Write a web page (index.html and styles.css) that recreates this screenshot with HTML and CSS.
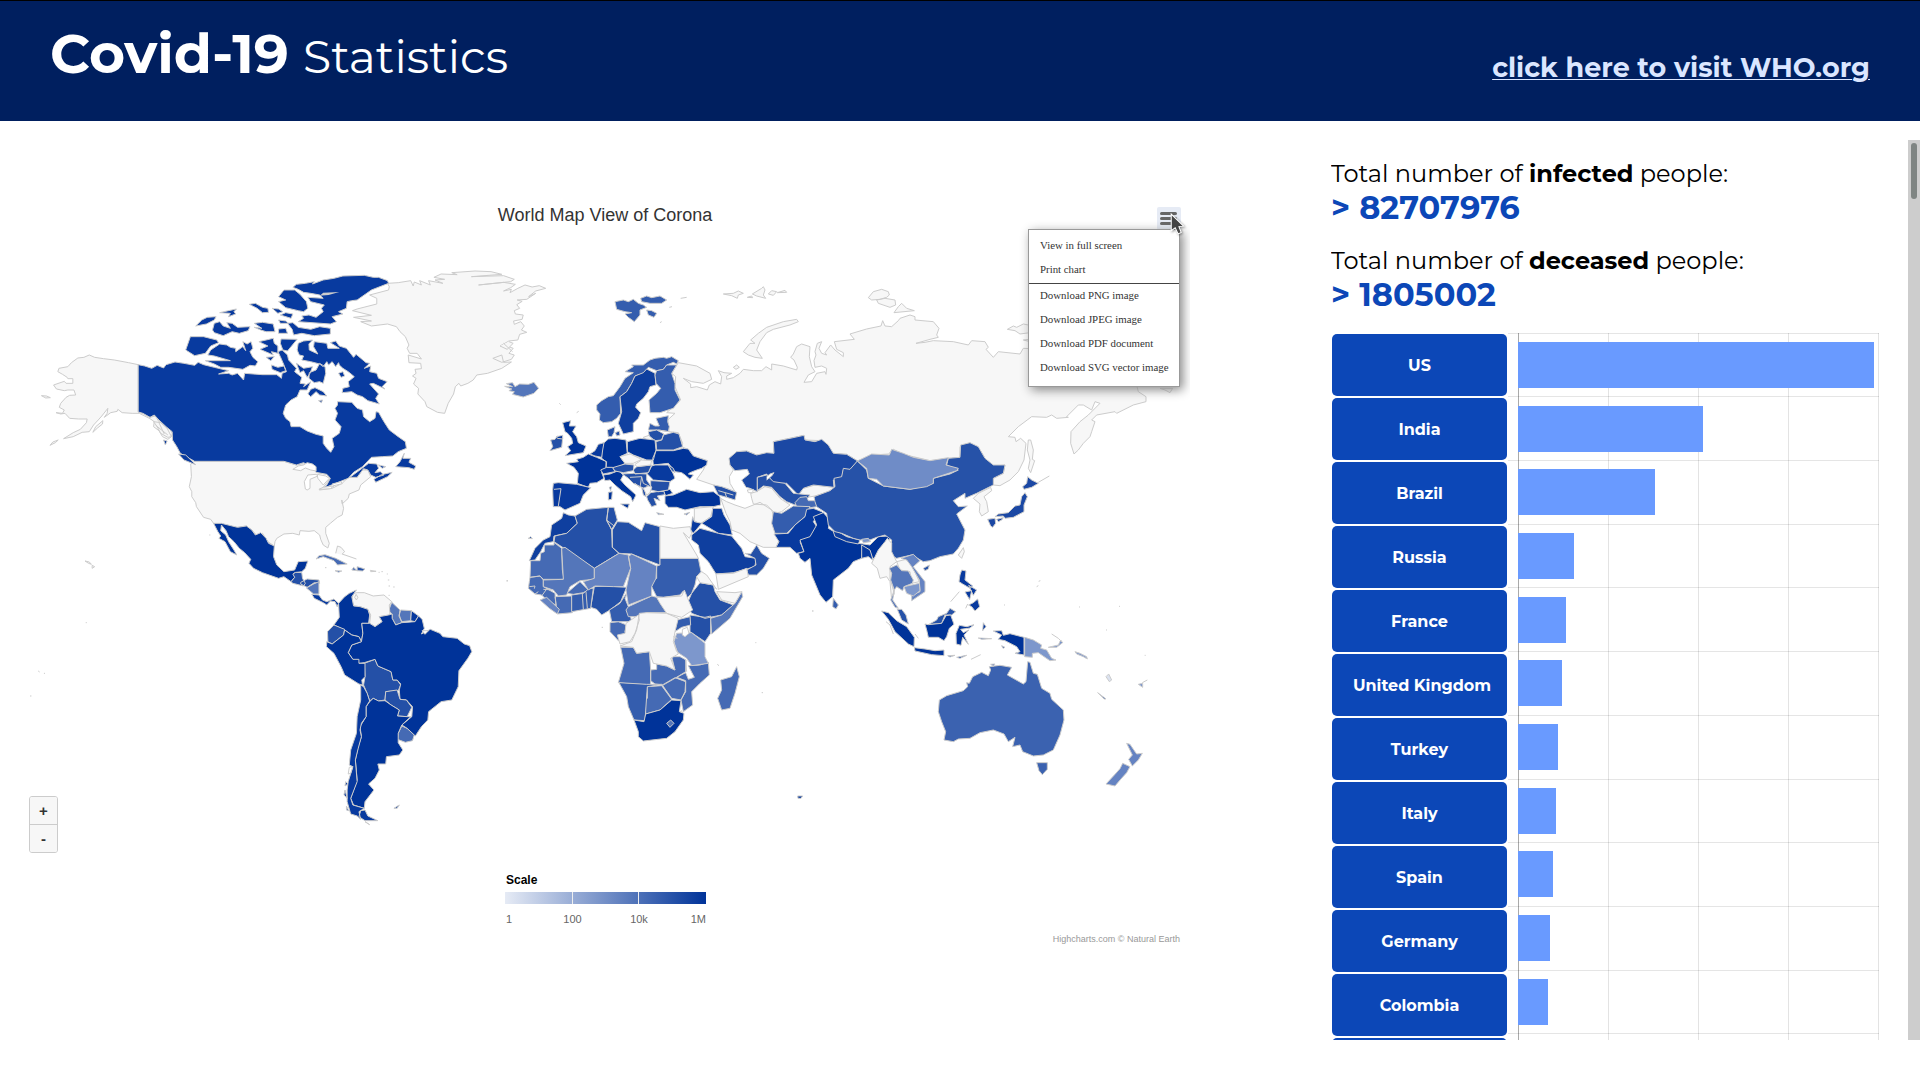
FILE: index.html
```html
<!DOCTYPE html>
<html lang="en">
<head>
<meta charset="utf-8">
<title>Covid-19 Statistics</title>
<link rel="stylesheet" href="styles.css">
</head>
<body>
<header class="header">
  <h1 class="brand"><span class="brand-name">Covid-19</span><span class="brand-sub">Statistics</span></h1>
  <a class="who-link" href="#">click here to visit WHO.org</a>
</header>
<main class="main">
  <section class="chart">
    <h2 class="chart-title">World Map View of Corona</h2>
    <div class="map-wrap">
      <svg class="map" viewBox="0 240 1190 600" width="1190" height="600">
        <!-- North America -->
        <g transform="translate(0 240) scale(.357143 .333333)">
          <g class="c-none">
            <path d="M387,374 360,368 320,360 290,356 265,352 250,345 235,352 218,354 200,368 190,380 165,385 162,395 175,403 188,412 190,416 204,416 204,430 185,430 180,424 150,435 158,447 180,452 190,450 207,450 212,465 195,466 185,472 170,490 166,502 180,510 175,520 157,518 170,522 182,520 195,535 220,537 244,537 242,548 225,568 205,578 178,596 205,590 230,577 250,575 262,555 275,540 285,528 302,505 300,520 292,532 310,518 328,514 330,508 342,518 370,520 390,520 405,528 420,536 432,545 430,560 445,572 455,590 470,598 480,590 483,580 470,560 455,550 445,545 435,528 420,532 400,520 387,516Z"/>
            <path d="M140,616 148,606 163,600 155,608ZM116,467 130,468 141,473 128,474ZM260,577 268,560 288,542 287,552 273,564Z"/>
            <path d="M430,545 450,548 468,565 480,590 470,592 450,580 440,560ZM436,556 470,585M445,548 460,582"/>
            <path d="M534,672 545,664 795,664 830,675 845,672 860,672 880,685 885,697 915,703 925,715 905,742 895,750 930,745 958,730 975,712 1000,712 1015,690 1030,690 1038,710 1010,735 1005,750 978,762 975,775 958,792 957,780 962,805 958,825 945,832 925,850 912,862 912,880 922,910 918,924 905,915 898,898 895,885 880,872 865,874 840,872 838,885 820,880 795,882 775,895 770,905 768,918 750,905 735,880 718,885 705,870 690,858 665,862 640,862 620,855 598,850 590,838 570,832 550,800 548,788 537,770 537,755 530,740 536,710Z"/>
            <path d="M1085,130 1115,128 1150,122 1157,138 1160,126 1180,135 1175,122 1205,135 1200,122 1240,130 1218,120 1245,118 1215,112 1235,102 1280,104 1265,98 1330,93 1375,95 1405,103 1320,110 1410,107 1440,118 1430,125 1340,135 1410,127 1443,133 1430,143 1410,153 1432,148 1428,158 1450,145 1470,135 1490,141 1510,137 1528,145 1500,153 1480,170 1500,160 1475,178 1448,180 1462,184 1447,194 1455,205 1440,212 1443,222 1465,225 1462,238 1438,243 1440,253 1458,245 1468,258 1460,270 1475,277 1455,283 1450,300 1425,303 1400,318 1420,318 1437,325 1425,340 1440,345 1432,358 1405,367 1380,355 1405,345 1410,367 1432,366 1405,385 1365,400 1335,405 1325,420 1310,430 1290,438 1285,430 1275,440 1270,462 1255,490 1245,520 1225,517 1195,500 1190,485 1170,462 1172,445 1158,432 1165,415 1155,408 1165,400 1162,388 1180,386 1178,370 1145,368 1143,345 1180,357 1168,340 1147,340 1140,325 1145,315 1135,290 1120,275 1110,260 1085,252 1040,258 1010,245 1040,243 990,232 1040,226 987,212 1000,207 1055,192 1055,175 1035,165 1088,150 1090,140Z"/>
            <path d="M1400,318 1420,328 1437,310 1425,305M1410,310 1435,335M940,940 945,918 955,922 965,935 958,942 998,957"/>
          </g>
          <g class="c-ca">
            <path d="M387,374 405,378 425,385 440,376 458,384 465,374 490,366 515,370 545,376 555,367 570,374 600,382 640,392 612,402 640,400 650,405 665,400 682,420 685,400 735,404 775,404 788,415 790,400 802,395 795,375 785,350 778,335 790,330 805,345 808,360 830,385 825,395 845,412 840,430 855,432 850,440 870,425 860,450 840,450 832,470 815,480 800,495 793,520 800,535 812,545 815,560 840,560 860,573 885,583 905,588 905,610 915,625 926,637 935,620 930,595 950,580 955,560 938,540 945,520 938,505 945,495 945,485 985,487 1000,505 1015,510 1018,530 1035,545 1050,535 1053,515 1060,517 1075,545 1090,570 1115,590 1135,605 1138,625 1115,635 1100,648 1070,650 1040,652 1015,680 990,697 975,715 940,730 905,745 915,735 925,715 915,703 885,697 880,685 870,680 850,668 830,675 795,664 545,664 530,655 505,640 495,620 483,600 482,575 465,560 445,540 432,525 420,532 400,520 387,516Z"/>
            <path d="M980,712 1015,684 1032,670 1055,672 1060,685 1050,698 1065,695 1075,705 1052,712 1038,705 1030,690 1018,686 1000,712ZM1047,718 1068,704 1098,697 1085,710 1052,727ZM1132,640 1128,655 1150,655 1145,667 1164,678 1160,688 1145,683 1108,680 1120,665ZM500,642 520,645 548,674 515,660ZM458,600 468,603 463,615ZM1060,675 1080,680 1070,685Z"/>
            <path d="M832,330 835,310 850,303 875,300 865,312 866,330 890,342 878,320 880,305 915,310 918,325 950,325 925,308 940,303 950,318 970,325 985,345 990,352 997,343 1005,350 1025,368 1035,370 1020,385 1038,378 1035,395 1055,400 1060,415 1084,425 1070,440 1078,447 1045,430 1035,432 1060,462 1052,475 1062,492 1030,482 1015,470 1000,465 985,455 958,458 960,445 978,440 975,425 992,410 975,395 960,385 950,375 948,368 940,380 930,365 920,375 915,365 905,380 895,372 870,365 845,360 850,348 838,345ZM948,400 960,395 965,408 955,412ZM866,398 885,390 895,370 910,380 912,400 905,430 895,425 880,428 865,415ZM862,462 870,448 882,443 905,455 915,468 895,465 885,455 870,470ZM892,482 903,480 900,488ZM830,370 850,385 875,380 868,400 860,412 850,392 840,398Z"/>
            <path d="M582,345 590,330 615,312 635,315 645,322 660,325 660,335 680,320 688,332 680,305 692,312 703,305 708,325 700,335 708,352 722,365 715,378 700,376 680,388 640,382 618,382 600,372 575,362 645,362 600,348ZM533,290 570,290 607,300 612,308 590,318 575,340 545,347 520,330ZM725,305 765,295 768,310 778,318 778,340 760,335 765,345 728,328 750,318ZM745,352 768,350 758,362ZM787,297 832,298 815,320 805,333 792,330 785,310ZM760,375 778,382 795,378 800,392 785,398 762,388Z"/>
            <path d="M595,270 600,250 615,245 625,258 645,265 635,248 650,250 665,262 700,260 695,272 670,280 650,275 625,287 600,278ZM548,258 565,240 580,232 605,230 600,240 578,252ZM712,262 733,265 712,250 735,247 765,252 770,275 745,275 730,270ZM780,267 800,265 805,280 780,280ZM780,240 800,243 808,250 785,250ZM698,193 715,190 735,202 750,205 752,217 735,218 720,205ZM615,218 640,212 662,207 655,215 660,222 640,230 645,220ZM762,205 780,207 792,215 778,220ZM785,225 800,218 820,222 815,235Z"/>
            <path d="M780,170 795,150 825,150 840,163 858,185 862,205 850,215 835,212 800,203 780,185 800,180ZM805,250 820,248 835,262 870,268 895,260 925,265 925,282 880,287 845,280 822,285 818,268ZM820,142 830,133 855,130 880,125 875,132 905,120 935,115 960,108 1020,106 1045,112 1060,112 1085,122 1088,130 1040,150 1000,180 985,182 972,185 970,205 948,215 960,222 930,230 942,245 925,252 835,245 850,235 845,228 865,225 885,232 905,215 900,205 908,195 870,185 862,172 905,175 895,165 870,160 850,157 835,148Z"/>
          </g>
          <path class="ice" d="M895,167 905,158 950,156 920,165Z"/>
          <path class="c-d3" d="M1413,439 1435,440 1418,431 1435,428 1442,440 1455,432 1480,433 1495,427 1508,445 1495,460 1465,471 1435,463 1440,455 1425,452 1433,447Z"/>
          <path class="sea" d="M820,688 835,678 850,675 860,668 875,672 885,680 885,693 870,690 855,684 842,692ZM855,747 852,725 862,705 885,703 890,708 868,718 868,745 860,750ZM888,703 912,708 922,715 905,735 890,715ZM893,748 905,742 935,738 925,746ZM930,732 955,725 958,731 935,737Z"/>
        </g>
        <!-- Latin America -->
        <g transform="translate(0 500) scale(.357143 .333333)">
          <path class="c-0" d="M598,70 620,70 665,82 690,78 705,90 715,105 730,98 745,115 752,130 768,138 766,170 775,195 795,215 825,210 835,185 862,183 855,205 845,215 825,218 825,232 815,245 795,230 780,235 735,218 710,205 697,190 702,178 685,158 670,145 655,125 640,110 633,92 620,75 618,92 632,105 640,125 655,150 663,165 645,155 630,125 613,115 618,108 610,95Z"/>
          <path class="c-d1" d="M815,245 825,232 820,222 828,217 845,218 847,235 855,250 850,258 820,250ZM842,247 860,237 893,240 895,250 880,248 860,262 842,252ZM1000,200 1022,207 1015,213 1000,212ZM1020,490 1050,478 1058,498 1095,515 1100,540 1112,540 1122,555 1115,572 1080,575 1078,600 1060,603 1045,595 1035,603 1028,580 1018,555 1022,530Z"/>
          <path class="c-d3" d="M858,264 878,252 893,245 893,282 878,282ZM1097,307 1120,330 1118,345 1125,368 1108,375 1098,355 1098,342 1088,332ZM1122,330 1152,332 1150,362 1125,365 1117,348Z"/>
          <path class="c-d2" d="M885,177 893,167 910,164 940,175 972,192 945,195 935,182 905,170ZM985,210 1000,212 990,202ZM938,212 957,213 948,217ZM1125,678 1140,685 1160,705 1155,722 1135,727 1113,718 1115,700Z"/>
          <path class="c-ca" d="M873,283 893,285 903,300 915,305 935,297 948,310 944,320 938,305 925,303 915,315 905,308 880,295ZM1152,332 1172,348 1162,365 1150,362Z"/>
          <path class="c-none" d="M990,280 1000,278 1020,278 1045,288 1075,285 1097,305 1090,315 1092,345 1062,350 1070,365 1050,380 1035,370 1038,345 1030,328 1008,320 990,318 985,295ZM238,183 250,186 256,193 248,190ZM258,196 265,200 258,205ZM1037,211 1053,214 1038,215ZM997,283 1002,292 998,300 993,292Z"/>
          <path class="c-none" d="M240,368h3M107,513l4,3M123,520h3M84,588h4M586,105h3M1068,215h4M1083,222h3M1086,240h4M1088,258h4M1101,261h4M1088,286h3M910,203h4M1418,243h4M1060,217h3"/>
          <path class="c-0" d="M948,310 965,290 978,280 998,270 985,290 990,318 1008,320 1030,328 1035,345 1032,370 1013,370 1016,400 1012,425 1005,410 985,405 965,390 935,375 950,352Z"/>
          <path class="c-0" d="M1062,350 1088,345 1098,342 1098,355 1108,375 1125,368 1162,365 1172,348 1182,358 1188,385 1180,402 1205,388 1232,400 1240,410 1280,415 1300,432 1315,437 1321,455 1310,475 1285,512 1283,560 1265,600 1235,605 1200,635 1198,660 1180,680 1163,708 1140,685 1125,675 1153,650 1155,620 1138,600 1120,598 1118,570 1122,552 1112,540 1100,540 1095,515 1058,498 1050,478 1020,488 1005,490 988,478 975,458 985,435 1012,425 1016,400 1013,370 1035,370 1050,380 1070,365Z"/>
          <path class="c-d1" d="M935,375 965,388 962,405 930,432 918,425 917,395ZM1078,600 1080,575 1112,570 1120,598 1138,600 1153,622 1140,650 1113,648 1118,630 1095,615Z"/>
          <path class="c-0" d="M965,390 985,405 1005,410 1012,425 985,435 975,458 988,478 1005,478 1005,490 1022,490 1022,530 1013,540 1015,555 1005,552 965,525 955,500 935,460 914,440 915,425 930,432 962,405Z"/>
          <path class="c-0" d="M1035,605 1045,595 1060,603 1078,602 1095,615 1118,630 1113,648 1140,650 1150,650 1125,675 1115,700 1115,728 1128,750 1118,765 1082,770 1080,792 1058,792 1062,810 1050,835 1032,852 1047,870 1022,905 1020,925 990,915 982,895 1000,840 995,780 1003,740 1012,710 1008,680 1025,650 1025,620Z"/>
          <path class="c-ca" d="M1010,555 1018,560 1028,580 1035,603 1025,620 1025,650 1012,670 1008,690 1012,710 1003,745 995,780 1000,845 982,895 988,915 1020,925 1005,935 1010,958 1000,948 982,942 972,905 972,870 975,845 988,800 978,795 982,750 998,700 1000,650 1010,600ZM1010,932 1022,930 1030,948 1058,962 1022,962 1005,950ZM968,845 974,852 966,858ZM966,870 972,895 963,885ZM970,918 976,932 970,930ZM1103,925 1118,915 1112,925ZM1022,965 1035,974Z"/>
          <path class="sea" d="M978,802 988,800 982,820 975,822ZM1182,392 1200,392 1190,403Z"/>
        </g>
        <!-- Europe, Russia and Central Asia -->
        <g transform="translate(500 250) scale(.333333)">
          <path class="c-none" d="M535,338 590,348 630,370 635,388 610,400 575,395 550,385 572,402 572,413 590,410 622,420 628,405 645,395 662,402 665,380 655,362 672,368 695,370 680,378 680,388 700,383 720,370 730,358 760,362 785,362 798,350 815,360 815,342 850,348 890,360 892,352 882,330 872,322 880,312 890,290 905,282 930,290 928,320 935,350 945,365 925,375 912,397 935,395 950,370 975,365 978,373 980,355 965,348 945,352 942,332 948,315 945,305 952,280 965,275 957,295 965,310 980,315 975,308 992,285 1005,300 1030,320 1030,308 1010,298 1003,275 1063,268 1050,252 1100,237 1143,228 1148,212 1155,228 1175,230 1195,212 1200,205 1230,195 1245,200 1245,210 1300,215 1317,235 1310,255 1315,262 1290,268 1248,280 1275,277 1300,272 1360,275 1405,285 1415,272 1455,275 1465,292 1458,298 1480,322 1495,305 1560,312 1570,295 1700,300 1905,385 1915,425 1938,440 1938,455 1900,465 1850,490 1845,485 1790,495 1775,510 1785,515 1775,545 1770,560 1750,580 1735,600 1722,612 1712,580 1713,545 1740,515 1765,495 1800,460 1785,455 1775,480 1750,465 1735,465 1700,500 1705,502 1670,505 1655,495 1640,502 1595,500 1555,530 1525,560 1545,562 1548,575 1562,565 1578,580 1572,630 1555,665 1530,690 1500,707 1480,705 1480,685 1510,670 1515,645 1470,650 1440,600 1410,578 1380,590 1380,622 1345,625 1290,632 1240,620 1215,615 1180,598 1165,612 1120,615 1073,633 1040,613 1000,610 965,572 915,570 912,556 820,575 822,610 770,615 740,603 710,605 690,625 690,645 700,660 688,680 690,700 705,725 680,715 640,705 590,688 610,660 622,632 580,618 568,600 545,590 548,580 535,548 507,545 503,510 525,490 500,488 542,450 525,410 527,380 515,370Z"/>
          <path class="c-none" d="M730,305 750,280 765,280 752,270 775,250 800,232 850,215 890,208 895,215 870,225 820,238 800,248 780,275 770,300 787,325 765,322 745,315ZM670,132 700,130 715,123 730,130 715,135 712,145 695,137ZM757,132 785,115 790,110 795,120 790,135 797,145 770,138ZM805,132 815,122 830,125 820,136ZM832,128 855,121 860,127ZM742,142 755,138 758,143ZM700,352 710,345 718,352 708,358ZM430,562 450,555 458,568 440,570ZM1105,143 1120,125 1145,118 1165,125 1168,135 1160,142 1140,148 1115,150ZM1130,150 1155,145 1185,150 1187,165 1170,172 1135,160ZM1182,188 1195,170 1205,160 1220,175 1243,182ZM1522,238 1540,228 1550,232 1570,222 1590,226 1590,248 1560,252 1545,242ZM1570,270 1590,268 1590,275ZM1585,570 1592,570 1600,600 1597,628 1604,632 1592,668 1585,655 1590,630 1582,600ZM1980,415 2018,415 2010,428 1995,420ZM542,145 560,142M508,172l8,-2M480,218l5,-3M178,460l4,4M230,488l6,-4"/>
          <path class="c-f" d="M345,155 370,150 385,155 400,148 415,160 430,165 440,172 420,180 420,195 403,215 385,202 375,192 395,188 375,185 350,178ZM422,145 440,138 455,143 480,138 500,150 485,160 450,160 425,155ZM440,180 455,182 470,190 462,202 445,195Z"/>
          <path class="c-f" d="M290,465 305,452 325,440 340,437 360,410 375,385 400,368 375,365 400,350 395,345 430,345 450,330 465,325 490,322 500,325 515,320 535,332 530,342 520,337 500,345 490,358 470,362 445,352 430,370 405,378 395,400 380,425 360,440 362,490 350,505 335,515 310,518 298,510 300,492 290,480Z"/>
          <path class="c-a" d="M405,378 430,368 440,357 465,370 468,405 450,410 445,425 430,445 410,462 407,472 422,488 415,505 400,520 400,545 370,552 355,520 365,485 360,440 380,425 395,400Z"/>
          <path class="c-f" d="M470,362 490,358 500,345 530,345 515,370 525,400 525,420 540,450 520,475 480,488 450,488 447,450 470,430 482,415 468,400 465,375ZM468,505 505,497 503,515 508,530 505,545 475,540 445,540 450,520 465,528 478,528Z"/>
          <path class="c-d1" d="M322,540 345,530 342,548 335,560 325,560ZM346,548 358,543 360,555 350,558ZM152,570 165,568 172,558 188,565 185,592 150,602 158,590ZM445,545 470,540 492,552 485,570 465,572 448,558ZM490,555 520,547 537,552 548,590 520,600 470,600 468,575 485,570Z"/>
          <path class="c-0" d="M188,518 212,512 208,528 228,528 218,545 230,560 235,578 258,588 250,608 195,617 212,602 203,590 218,580 215,565 203,550 195,545ZM170,560 188,556 188,567 172,565ZM200,640 235,635 230,628 250,622 265,612 290,622 320,635 318,655 305,668 312,685 290,698 270,700 265,712 232,700 235,670 222,652ZM310,580 325,567 345,565 378,570 382,610 360,620 375,640 350,655 318,652 318,635 305,625 305,595ZM382,575 420,565 465,570 468,600 460,630 440,630 400,615 382,605ZM468,602 520,602 550,595 565,597 580,618 622,632 620,645 605,655 590,660 570,668 565,672 580,675 570,688 555,675 545,668 525,665 505,640 460,645 458,625ZM310,675 330,672 355,662 370,675 362,690 375,705 408,735 398,755 392,740 365,722 345,705 330,690 315,692ZM362,762 388,762 383,775ZM325,727 337,725 335,748 325,750ZM328,712 334,710 332,722ZM495,738 520,735 560,718 600,728 640,725 660,740 662,765 640,770 600,770 555,780 530,772 505,772 495,760ZM490,722 510,718 518,730 497,737Z"/>
          <path class="c-ca" d="M270,612 285,602 295,583 312,578 308,600 305,622 285,618ZM302,660 320,652 338,652 345,665 310,672ZM445,668 455,648 465,645 505,645 520,672 525,685 510,695 460,690 440,670ZM160,700 175,698 230,703 272,713 250,735 240,760 195,780 180,770 160,770 158,720Z"/>
          <path class="c-d1" d="M338,653 375,642 402,645 400,662 370,668 345,663ZM400,660 410,650 455,645 445,668 405,672ZM367,672 400,670 440,672 440,690 455,712 432,718 425,712 400,700 385,685ZM452,692 510,695 505,720 475,725 452,720ZM425,712 435,716 438,740 430,735ZM440,740 452,728 470,725 492,724 494,734 472,738 480,752 462,745 470,765 455,770 443,750ZM505,645 520,655 525,668 515,662ZM640,705 665,710 710,727 705,750 680,742 655,735Z"/>
          <path class="line" d="M162,718 183,716 175,768M390,682 425,680 420,712 405,700M425,680 430,700 455,712M655,722 700,735M680,742 675,728M475,540 508,545"/>
          <path class="c-none" d="M360,620 390,612 425,628 400,640 375,640ZM405,643 425,630 455,632 452,645 410,650ZM430,715 445,708 455,712 450,728 440,735ZM752,730 770,725 795,710 815,715 840,745 870,765 845,785 825,790 800,765 760,762 755,745ZM895,735 910,715 945,705 1003,712 985,725 945,738 905,745ZM583,775 640,770 632,800 600,822 583,812ZM662,745 680,755 705,765 735,775 780,757 815,780 822,800 820,825 838,870 828,892 790,892 750,875 720,850 695,840 690,815 678,790Z"/>
          <path class="c-e" d="M687,625 710,605 740,603 770,615 800,608 822,610 820,575 870,565 912,556 915,570 945,575 965,568 985,585 1000,610 1040,613 1073,633 1050,660 1030,660 1025,685 1000,690 1002,712 940,705 910,715 895,735 860,700 820,700 800,672 772,682 772,725 750,715 738,712 725,690 748,672 742,658 705,662 690,645Z"/>
          <path class="c-d1" d="M772,682 800,675 820,695 855,700 880,730 930,735 920,748 885,765 860,755 840,740 815,712 790,708 772,722Z"/>
          <path class="c-d2" d="M885,758 900,742 920,740 925,752 950,752 950,770 920,775 890,770Z"/>
          <path class="c-f" d="M820,785 845,790 880,768 930,770 915,800 885,825 860,850 825,850 815,820Z"/>
          <path class="c-ca" d="M635,800 638,775 665,775 672,795 690,825 697,855 655,850 605,820ZM578,800 583,815 605,820 580,850 572,840Z"/>
          <path class="sea" d="M800,690 815,678 822,668 810,672 800,680M742,720 760,718 758,728 745,728Z"/>
          <path class="c-d2" d="M470,788 492,793 475,794ZM552,792 570,787 560,795Z"/>
        </g>
        <!-- Africa, Arabia and South Asia -->
        <g transform="translate(500 490) scale(.333333)">
          <path class="c-a" d="M190,68 205,75 225,78 232,100 200,130 162,138 160,155 135,160 122,185 105,210 88,212 105,175 130,150 150,140 155,105 185,85ZM575,135 600,115 655,130 695,138 725,175 735,200 768,205 765,230 700,248 648,252 625,215 600,190 595,165 575,150ZM85,145 92,140 97,146Z"/>
          <path class="c-d2" d="M162,157 185,175 187,240 192,268 130,268 120,258 90,262 92,212 120,212 122,190 133,185 133,165 162,165ZM330,398 355,395 380,405 375,425 380,435 355,452 330,425ZM362,472 400,472 410,490 448,485 452,540 452,585 370,580 355,578 372,520ZM452,540 470,538 470,522 500,528 525,540 515,500 540,500 558,510 557,545 530,562 490,585 465,582 452,572ZM557,548 565,568 583,562 565,527 600,525 625,517 628,555 600,580 575,605 578,645 550,665 543,630 557,605 557,572 530,562ZM487,585 525,563 557,575 555,605 543,630 515,625ZM442,590 485,587 515,628 480,660 437,672 435,625 442,625ZM710,530 718,560 705,610 690,655 665,660 653,625 665,600 662,570 695,560ZM88,275 90,262 120,258 130,270 130,290 165,310 168,345 145,335 125,315 105,312 85,295ZM165,320 215,318 217,368 172,372ZM200,310 240,275 265,300 250,308 220,313Z"/>
          <path class="c-d1" d="M165,138 200,130 232,100 225,78 260,58 325,52 320,90 335,120 337,172 357,190 283,235 162,155ZM325,52 342,52 352,90 335,118 320,92ZM337,120 352,95 385,97 425,122 435,98 480,110 480,225 440,210 395,192 357,190 337,172ZM283,290 320,288 380,292 362,335 330,360 305,375 290,358 272,352ZM600,278 640,285 645,305 660,330 700,345 665,375 615,385 575,370 560,345 575,310ZM570,375 615,382 632,378 632,430 615,455 570,425ZM735,190 752,192 770,165 785,190 808,205 790,235 770,255 745,255 740,240 768,225 765,205Z"/>
          <path class="c-f" d="M480,205 595,205 603,245 590,260 585,285 575,310 560,325 550,303 540,315 490,322 470,320 455,290 460,270 470,265 470,228 480,225ZM530,390 570,380 572,405 545,412 525,425ZM385,300 375,325 385,350 395,395 335,395 328,360 360,340ZM215,315 250,310 268,295 280,295 272,355 215,365ZM357,578 440,583 485,583 442,590 435,692 402,690 385,650 380,620ZM1000,325 1015,345 1008,357 998,350Z"/>
          <path class="c-d3" d="M185,175 195,172 283,235 283,268 240,272 210,290 200,315 175,318 160,300 130,290 130,270 190,268ZM385,350 455,318 470,322 500,368 440,368 410,380 385,380 378,360ZM725,305 728,320 690,385 635,432 632,385 665,375 705,340Z"/>
          <path class="c-d4" d="M283,235 357,190 385,195 392,235 370,290 340,290 285,288 265,300 250,275 283,265ZM395,192 470,228 468,265 455,290 455,318 385,345 378,300 392,235 385,200ZM120,330 140,322 178,358 172,372 148,355Z"/>
          <path class="c-d5" d="M530,430 575,428 615,460 615,500 625,520 575,527 560,505 530,485 522,455Z"/>
          <path class="c-none" d="M480,108 520,115 570,110 575,130 568,145 550,128 590,195 595,205 480,205ZM470,322 490,322 545,318 553,300 563,325 578,360 545,382 500,370 480,340ZM590,260 605,245 620,255 650,298 640,285 600,278ZM650,305 705,308 725,305 705,340 665,330ZM360,468 395,455 410,420 418,370 440,368 500,370 535,385 525,425 520,455 535,492 512,505 525,540 500,528 460,520 448,485 410,490 400,472ZM352,435 375,430 378,400 415,375 418,390 405,430 390,455 360,462ZM535,668 545,662 548,675 538,678ZM648,252 700,250 740,235 745,260 655,298ZM20,272h4M305,412h4M652,523l5,4M785,608h4M766,458h3M937,363h4"/>
          <path class="sea" d="M547,418 562,412 567,430 555,440 547,435ZM522,460 530,485"/>
          <path class="c-0" d="M402,690 432,695 437,672 480,660 515,630 543,632 538,665 552,670 550,690 525,725 500,745 430,753 415,740 415,725Z"/>
          <path class="c-d3" d="M500,700 512,690 522,700 510,712Z"/>
          <path class="line" d="M130,298 160,300M125,318 138,300M88,290 105,288 103,296M105,312 115,305M247,312 250,358M258,305 262,355M320,90 345,110M557,510 560,545M520,440 532,445"/>
          <path class="c-ca" d="M822,132 865,130 885,105 915,80 920,58 940,55 965,65 985,85 950,80 940,95 950,110 930,145 900,155 912,185 890,190 870,172 828,172 837,155ZM1080,165 1105,165 1115,180 1118,210 1105,200 1085,205Z"/>
          <path class="c-0" d="M940,80 970,68 990,90 985,115 1010,130 1040,148 1075,160 1110,165 1135,140 1165,138 1172,145 1145,170 1130,205 1118,205 1110,180 1085,165 1085,205 1060,215 1045,235 1000,270 998,320 978,337 960,315 935,255 930,205 915,217 900,205 895,190 912,185 900,150 930,140 950,105Z"/>
          <path class="c-a" d="M1000,125 1010,122 1040,140 1080,150 1075,162 1040,155 1005,140Z"/>
          <path class="c-0" d="M893,918 908,918 903,925 894,925Z"/>
        </g>
        <!-- East Asia -->
        <g transform="translate(720 250) scale(.333333)">
          <path class="c-g" d="M282,740 330,722 345,710 342,685 365,680 370,655 390,658 412,633 440,660 445,685 490,708 570,718 640,700 640,685 690,672 715,660 680,645 685,625 720,622 722,585 750,578 775,590 795,625 820,645 855,645 850,670 820,685 820,705 770,730 735,745 735,730 700,752 715,770 742,768 710,792 735,840 730,870 715,895 700,912 660,920 630,932 610,935 575,915 530,925 510,915 515,870 495,855 470,862 450,870 420,870 400,865 365,850 345,845 325,825 320,790 290,770 285,755Z"/>
          <path class="c-m" d="M412,633 455,612 508,615 515,598 550,610 580,622 630,632 685,623 678,645 715,655 710,662 640,685 640,700 620,710 570,718 490,708 470,688 445,685 440,655Z"/>
          <path class="c-none" d="M760,745 775,730 812,712 815,722 792,740 800,755 805,785 785,798 778,785 780,762ZM715,915 730,893 733,905 725,925ZM955,697 988,678"/>
          <path class="c-e" d="M923,680 935,690 955,700 935,712 912,718 908,710 920,700ZM915,728 922,740 912,765 912,785 880,802 855,805 850,798 825,800 835,792 865,788 885,768 900,765 905,740ZM803,808 825,805 827,820 818,832 812,828ZM830,808 850,803 845,810 835,815Z"/>
          <path class="c-d5" d="M425,868 445,865 452,875 430,878Z"/>
        </g>
        <!-- Southeast Asia and Oceania -->
        <g transform="translate(800 500) scale(.333333)">
          <path class="c-none" d="M262,115 275,130 275,155 290,185 270,200 270,235 283,280 275,300 270,245 260,230 240,235 232,205 215,190 225,170 235,150 255,125ZM290,185 318,178 335,195 358,245 335,250 330,215 300,210Z"/>
          <path class="c-d4" d="M303,175 340,163 360,182 340,200 375,245 375,275 335,302 335,285 360,275 358,240 335,200 320,180ZM980,730 990,733 1003,752 1010,762 1027,760 1015,780 997,798 986,778 997,765ZM968,790 990,800 980,818 962,838 945,858 918,852 945,823 960,806Z"/>
          <path class="c-d3" d="M268,205 290,195 305,212 325,213 340,240 337,250 312,260 308,272 290,260 283,270 278,300 295,325 285,322 272,300 283,270 272,240 275,220Z"/>
          <path class="c-d5" d="M312,260 358,250 360,272 340,288 320,280ZM674,412 700,420 725,435 722,445 740,450 755,475 768,480 750,482 735,472 715,458 697,460 697,472 674,470ZM745,442 775,435 782,420 788,428 770,442ZM825,455 840,460 860,470 862,477 850,470 830,462ZM1015,553 1028,550 1028,562ZM1027,548 1042,540"/>
          <path class="c-g" d="M292,328 305,328 318,345 325,372 305,360ZM385,374 410,360 415,350 440,340 450,325 467,335 455,345 435,345 425,370ZM370,205 388,195 385,207 375,212Z"/>
          <path class="c-0" d="M245,333 265,338 290,362 320,380 343,412 342,440 325,432 285,395 265,358ZM375,372 385,374 425,370 438,347 452,345 462,373 448,385 440,410 432,422 415,412 385,412 380,390ZM343,443 375,447 405,452 432,450 432,467 395,464 345,453ZM478,376 500,380 522,374 510,384 482,388 490,398 507,390 492,405 505,433 488,412 483,436 469,432 468,400ZM580,393 605,392 610,406 630,401 672,412 672,465 645,460 660,455 650,440 615,422 595,418 605,405ZM443,467 465,466 450,471ZM470,472 500,466 480,475ZM535,414 575,416 545,418ZM550,368 558,380 548,392ZM893,578 918,597 912,597ZM605,437 615,442 609,445Z"/>
          <path class="c-ca" d="M485,210 498,213 495,240 518,258 510,265 488,252 477,245 480,225ZM495,276 515,272 509,299ZM506,256 530,270 520,286ZM506,315 520,308 533,297 539,320 525,333 515,320Z"/>
          <path class="line" d="M452,305 478,275M497,325 503,312M258,365 270,375 280,402M345,402 355,415M755,402 775,415 788,428M513,478 542,464M710,260l5,-3M716,244l5,-2M612,315h3M837,321h3M957,319h3M918,390h3M1034,466h3M36,333h3"/>
          <path class="c-d6" d="M918,530 926,522 935,540 928,545Z"/>
          <path class="c-au" d="M418,600 440,587 490,572 503,560 500,548 508,550 518,530 545,517 565,527 572,510 568,500 600,496 635,502 622,525 670,552 678,545 683,485 690,487 700,520 712,523 725,565 750,580 755,598 790,630 792,660 780,705 760,750 730,765 700,768 668,755 660,735 638,740 645,712 625,725 612,702 580,690 540,698 510,715 475,717 460,725 432,720 437,695 425,665 415,635ZM572,493 585,492 580,499ZM710,788 742,788 742,808 727,824 717,812Z"/>
        </g>
      </svg>
      <div class="zoom-buttons"><button>+</button><button>-</button></div>
    </div>
    <div class="legend">
      <h3 class="legend-title">Scale</h3>
      <div class="legend-bar"></div>
      <div class="legend-labels"><span>1</span><span>100</span><span>10k</span><span>1M</span></div>
    </div>
    <p class="credits">Highcharts.com © Natural Earth</p>
    <div class="menu-button"><i></i><i></i><i></i></div>
    <ul class="menu">
      <li>View in full screen</li>
      <li>Print chart</li>
      <li class="menu-rule"></li>
      <li>Download PNG image</li>
      <li>Download JPEG image</li>
      <li>Download PDF document</li>
      <li>Download SVG vector image</li>
    </ul>
    <svg class="cursor" viewBox="0 0 14 22" width="15" height="23"><path d="M1,1 1,17 4.8,14.2 7.6,20 10.6,18.6 8.4,13 12.8,12.6Z"/></svg>
  </section>
  <aside class="stats">
    <div class="stats-body">
      <div class="total"><p>Total number of <b>infected</b> people:</p><strong>&gt; 82707976</strong></div>
      <div class="total"><p>Total number of <b>deceased</b> people:</p><strong>&gt; 1805002</strong></div>
      <div class="bars">
        <div class="labels">
          <span>US</span><span>India</span><span>Brazil</span><span>Russia</span><span>France</span><span class="wide">United Kingdom</span><span>Turkey</span><span>Italy</span><span>Spain</span><span>Germany</span><span>Colombia</span><span></span>
        </div>
        <div class="plot">
          <div class="row"><i style="width:355.5px"></i></div>
          <div class="row"><i style="width:184.8px"></i></div>
          <div class="row"><i style="width:137px"></i></div>
          <div class="row"><i style="width:56px"></i></div>
          <div class="row"><i style="width:48px"></i></div>
          <div class="row"><i style="width:44px"></i></div>
          <div class="row"><i style="width:39.5px"></i></div>
          <div class="row"><i style="width:37.6px"></i></div>
          <div class="row"><i style="width:34.5px"></i></div>
          <div class="row"><i style="width:31.5px"></i></div>
          <div class="row"><i style="width:29.5px"></i></div>
          <div class="row"></div>
        </div>
      </div>
    </div>
    <div class="scrollbar"><div class="thumb"></div></div>
  </aside>
</main>
</body>
</html>
```
FILE: styles.css
```css
* { box-sizing: border-box; margin: 0; padding: 0; }
body { width: 1920px; height: 1080px; overflow: hidden; background: #fff; color: #000; font-family: Montserrat, Inter, sans-serif; }

.header { height: 121px; border-top: 1px solid #000; background: #001f5f; display: flex; justify-content: space-between; align-items: flex-start; padding: 0 50px; color: #fff; }
.brand { display: flex; align-items: baseline; font-weight: 400; line-height: 66px; padding-top: 20px; white-space: nowrap; }
.brand-name { font-size: 55.2px; font-weight: 700; width: 253px; }
.brand-sub { font-size: 45.8px; font-weight: 400; }
.who-link { color: #dbe6ff; font-size: 27px; font-weight: 700; line-height: 34px; margin-top: 50px; text-decoration-thickness: 1px; text-underline-offset: 2px; text-decoration-skip-ink: auto; white-space: nowrap; }

.main { display: flex; justify-content: space-between; height: 959px; }
.chart { position: relative; width: 1190px; height: 900px; overflow: hidden; padding-top: 82px; font-family: "Liberation Sans", Arial, sans-serif; }
.chart-title { padding-left: 20px; text-align: center; font-size: 18px; font-weight: 400; line-height: 24px; color: #333; height: 37px; }
.map-wrap { position: relative; height: 630px; }
.map { display: block; overflow: visible; }
.map path { stroke: #ccc; stroke-width: 1px; vector-effect: non-scaling-stroke; stroke-linejoin: round; fill: inherit; }
.map .c-none, .map .c-none path { fill: #f7f7f7; }
.map .c-ca, .map .c-ca path { fill: #083a9f; }
.map .ice { fill: #ccc; stroke: none; }
.map .sea { fill: #fff; }
.map .line { fill: none; }
.map .c-0 { fill: #039; }
.map .c-a { fill: #0f3f9f; }
.map .c-e { fill: #1b48a4; }
.map .c-g { fill: #2652a8; }
.map .c-d1 { fill: #2450a7; }
.map .c-f { fill: #345dae; }
.map .c-au { fill: #3b62b0; }
.map .c-d2 { fill: #456ab4; }
.map .c-d3 { fill: #5476ba; }
.map .c-d4 { fill: #6583c2; }
.map .c-m { fill: #6f8cc7; }
.map .c-d5 { fill: #7d97cc; }
.map .c-d6 { fill: #dbe2f0; }

.zoom-buttons { position: absolute; left: 29px; top: 556px; width: 29px; display: flex; flex-direction: column; border: 1px solid #ccc; border-radius: 3px; overflow: hidden; }
.zoom-buttons button { height: 27px; border: 0; background: #f7f7f7; color: #333; font: bold 15px/27px "Liberation Sans", Arial, sans-serif; }
.zoom-buttons button:first-child { height: 28px; border-bottom: 1px solid #ccc; }

.legend { width: 201px; margin-left: 505px; padding-top: 3px; }
.legend-title { font-size: 12px; line-height: 14px; padding: 0 0 5px 1px; color: #000; }
.legend-bar { height: 12px; background: linear-gradient(#eee, #eee) 67px 0 / 1px 12px no-repeat, linear-gradient(#eee, #eee) 133px 0 / 1px 12px no-repeat, linear-gradient(90deg, #e6ebf5, #039); }
.legend-labels { display: grid; grid-template-columns: 34px 67px 66px 34px; font-size: 11px; line-height: 14px; color: #666; padding-top: 8px; text-align: center; }
.legend-labels span:first-child { text-align: left; padding-left: 1px; }
.legend-labels span:last-child { text-align: right; }
.credits { text-align: right; font-size: 9px; line-height: 12px; color: #999; padding: 7px 10px 0 0; }

.menu-button { position: absolute; left: 1157px; top: 86px; width: 24px; height: 23px; border-radius: 2px; background: #e6ebf5; display: flex; flex-direction: column; gap: 2px; padding: 5px 4px 0 3px; }
.menu-button i { height: 3px; border-radius: 2px; background: #666; }
.menu { position: absolute; left: 1028px; top: 108px; width: 152px; height: 158px; list-style: none; border: 1px solid #999; background: #fff; box-shadow: 3px 3px 10px #888; padding: 3px 0; font: 10.85px/24px "Liberation Serif", "Times New Roman", serif; color: #333; white-space: nowrap; }
.menu li { height: 24px; padding-left: 11px; }
.menu .menu-rule { height: 1px; margin: 2px 0 -1px; background: #444; padding: 0; }
.cursor { position: absolute; left: 1170px; top: 92px; fill: #444; stroke: #fff; stroke-width: 1; filter: drop-shadow(1px 1px 1px rgba(0,0,0,.4)); }

.stats { display: flex; justify-content: space-between; width: 589px; height: 900px; margin-top: 19px; overflow: hidden; }
.stats-body { width: 560px; padding-top: 19px; }
.total { height: 87px; }
.total p { font-size: 24.05px; line-height: 30px; white-space: nowrap; }
.total b { font-weight: 700; }
.total strong { display: block; font-size: 32px; line-height: 37px; color: #0c47b7; }
.bars { display: flex; gap: 11px; }
.labels { display: flex; flex-direction: column; gap: 2px; width: 176px; padding: 1px 0 0 1px; }
.labels span { flex: none; height: 62px; border-radius: 5px; background: #0c47b7; color: #fff; font-size: 16px; font-weight: 700; line-height: 64px; text-align: center; }
.labels .wide { padding-left: 5px; }
.plot { position: relative; width: 361px; height: 764px; border-left: 1px solid #aaa; background: repeating-linear-gradient(90deg, transparent 0 89px, #e3e3e3 89px 90px); }
.row { height: 63.7px; padding-top: 9.2px; position: relative; top: -.3px; }
.row::before { content: ""; position: absolute; left: -11px; right: 0; top: 0; height: 1px; background: rgba(0,0,0,.1); }
.row i { display: block; height: 46px; margin-left: -1px; background: #699aff; position: relative; }
.scrollbar { width: 12px; background: #cdcdcd; padding: 3px; }
.thumb { height: 56px; border-radius: 3px; background: #7f8583; }
```
